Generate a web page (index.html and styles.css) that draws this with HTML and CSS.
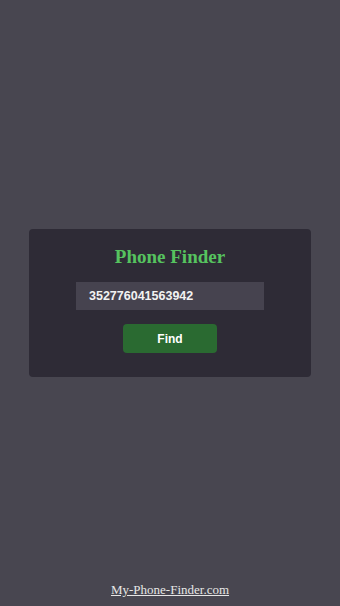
FILE: index.html
```html
<!DOCTYPE html>
<html>
<head>
<meta charset="utf-8">
<link rel="stylesheet" href="styles.css">
</head>
<body>
<main class="page">
  <div class="topbar"></div>
  <div class="spacer"></div>
  <section class="card">
    <h1 class="title">Phone Finder</h1>
    <div class="field">352776041563942</div>
    <button class="btn">Find</button>
  </section>
  <div class="spacer"></div>
  <footer class="footer"><a class="link" href="#">My-Phone-Finder.com</a></footer>
</main>
</body>
</html>
```
FILE: styles.css
```css
html, body {
  margin: 0;
  padding: 0;
  background: #484650;
}
.page {
  height: 606px;
  display: flex;
  flex-direction: column;
  align-items: center;
}
.spacer { flex: 1; }
.topbar { height: 24px; }
.card {
  width: 282px;
  height: 148px;
  box-sizing: border-box;
  background: #2e2b36;
  border-radius: 4px;
  display: flex;
  flex-direction: column;
  align-items: center;
  padding-top: 17px;
}
.title {
  margin: 0;
  font-family: "Liberation Serif", "DejaVu Serif", serif;
  font-weight: bold;
  font-size: 19px;
  line-height: 22px;
  color: #56c35f;
}
.field {
  margin-top: 14px;
  width: 188px;
  height: 28px;
  box-sizing: border-box;
  background: #46434f;
  color: #f2f2f2;
  font-family: "Liberation Sans", Arial, sans-serif;
  font-weight: bold;
  font-size: 12.5px;
  line-height: 28px;
  padding-left: 13px;
}
.btn {
  margin-top: 14px;
  width: 94px;
  height: 29px;
  border: none;
  border-radius: 4px;
  background: #2a6a31;
  color: #ffffff;
  font-family: "Liberation Sans", Arial, sans-serif;
  font-weight: bold;
  font-size: 12px;
  padding: 0;
}
.footer {
  height: 24px;
  display: flex;
  align-items: flex-start;
  justify-content: center;
}
.link {
  font-family: "Liberation Serif", "DejaVu Serif", serif;
  font-size: 13px;
  color: #e6e6e6;
  text-decoration: underline;
  line-height: 16px;
}
```
